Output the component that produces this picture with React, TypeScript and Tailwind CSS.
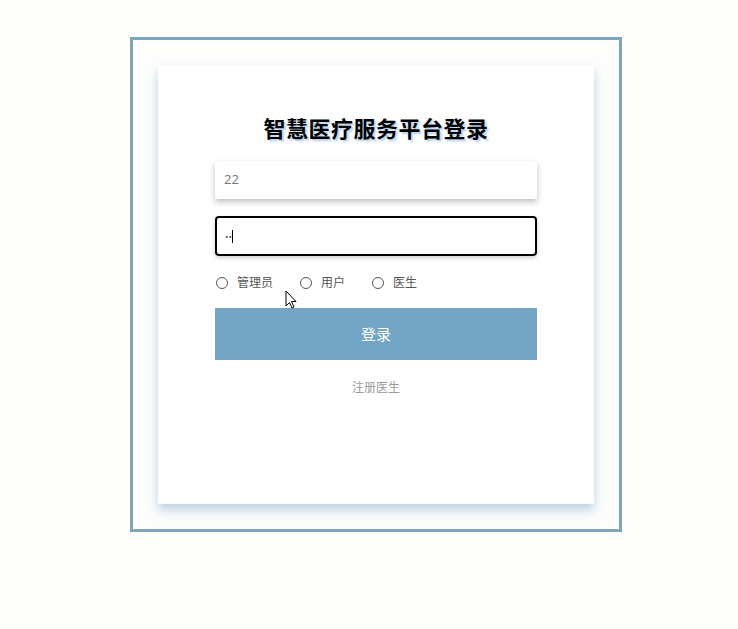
import React from "react";

export default function App() {
  return (
    <div
      className="w-[738px] h-[629px] bg-[#fdfdfc] relative"
      style={{ fontFamily: '"Open Sans", "Noto Sans CJK SC", sans-serif' }}
    >
      <div className="absolute left-[130px] top-[37px] w-[492px] h-[495px] border-[3px] border-[#7ea6bb] p-[25px]">
        <div className="w-[436px] h-[439px] bg-white shadow-[0_6px_10px_rgba(70,130,180,0.35)] flex flex-col items-center">
          <h1
            className="mt-[50px] text-[22px] leading-[26px] font-bold text-black tracking-[0.5px]"
            style={{ textShadow: "2px 2px 2px rgba(120,170,220,0.55)" }}
          >
            智慧医疗服务平台登录
          </h1>
          <div className="mt-[20px] w-[322px] h-[38px] bg-white shadow-[0_3px_6px_rgba(0,0,0,0.25)] flex items-center px-[9px] text-[13px] text-[#777]">
            22
          </div>
          <div className="mt-[17px] w-[322px] h-[40px] bg-white border-2 border-black rounded-[4px] shadow-[0_2px_5px_rgba(0,0,0,0.2)] flex items-center px-[8px] text-[13px] text-[#555]">
            <span className="text-[9px] leading-none">••</span>
            <span className="w-px h-[13px] bg-black" />
          </div>
          <div className="mt-[19px] w-[322px] flex items-center text-[12px] text-[#555] h-[16px]">
            <span className="ml-[1px] w-[12px] h-[12px] rounded-full border border-[#555]" />
            <span className="ml-[9px]">管理员</span>
            <span className="ml-[27px] w-[12px] h-[12px] rounded-full border border-[#555]" />
            <span className="ml-[9px]">用户</span>
            <span className="ml-[27px] w-[12px] h-[12px] rounded-full border border-[#555]" />
            <span className="ml-[9px]">医生</span>
          </div>
          <button className="mt-[17px] w-[322px] h-[52px] bg-[#72a6c4] text-white text-[15px] flex items-center justify-center">
            登录
          </button>
          <div className="mt-[19px] text-[12px] text-[#999]">注册医生</div>
        </div>
      </div>
      <svg
        className="absolute left-[285px] top-[290px]"
        width="13"
        height="20"
        viewBox="0 0 13 20"
      >
        <path
          d="M1 1 L1 16 L4.5 12.5 L7 18 L9 17 L6.5 11.5 L11 11.5 Z"
          fill="white"
          stroke="black"
          strokeWidth="1"
        />
      </svg>
    </div>
  );
}
